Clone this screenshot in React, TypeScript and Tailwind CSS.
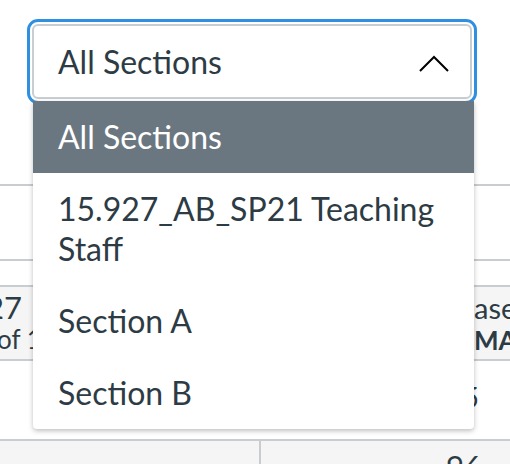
import React from "react";

const items = [
  { label: "All Sections", active: true },
  { label: "15.927_AB_SP21 Teaching Staff", active: false },
  { label: "Section A", active: false },
  { label: "Section B", active: false },
];

export default function App() {
  return (
    <div
      className="relative w-[510px] h-[464px] overflow-hidden bg-white text-[#2d3b45]"
      style={{ fontFamily: "Lato, 'Open Sans', sans-serif" }}
    >
      {/* Select trigger */}
      <div className="h-[184px] pt-[24px] pl-[32px]">
        <div className="relative w-[440px] h-[75px] flex items-center pl-[24px] bg-white border-2 border-[#c7cdd1] rounded-[6px] outline-3 outline-solid outline-offset-2 outline-[#2f8fe0]">
          <span className="text-[32px] leading-none">All Sections</span>
          <svg
            className="absolute left-[384px] top-[29px]"
            width="32"
            height="18"
            viewBox="0 0 32 18"
            fill="none"
          >
            <polyline points="2,16 16,2 30,16" stroke="#000" strokeWidth="2" />
          </svg>
        </div>
      </div>

      {/* Table behind */}
      <div className="border-t-2 border-[#c7cdd1] h-[75px]" />
      <div className="border-t-2 border-[#c7cdd1] h-[26px]" />
      <div className="border-t-2 border-[#c7cdd1] border-b-2 h-[76px] bg-[#f5f5f5] flex justify-between">
        <div className="w-[22px] flex flex-col items-end whitespace-nowrap pt-[3px]">
          <span className="text-[31px] leading-[34px]">27</span>
          <span className="text-[26px] leading-[30px] self-start -ml-[3px]">of 100</span>
        </div>
        <div className="w-[36px] flex flex-col whitespace-nowrap pt-[4px]">
          <span className="text-[29px] leading-[34px]">ase</span>
          <span className="text-[26px] leading-[30px] font-bold">MAX</span>
        </div>
      </div>
      <div className="h-[78px] flex justify-end pr-[31px]">
        <span className="text-[28px] leading-[72px] whitespace-nowrap">5</span>
      </div>
      <div className="border-t-2 border-[#c7cdd1] h-[40px] bg-[#f5f5f5] flex">
        <div className="w-[261px] border-r-2 border-[#c7cdd1]" />
        <div className="flex-1 pl-[185px] pt-[10px] text-[31px] leading-none">96</div>
      </div>

      {/* Open menu */}
      <ul className="absolute left-[33px] top-[101px] w-[441px] bg-white rounded-b-[4px] shadow-[0_2px_5px_rgba(0,0,0,0.25)] z-10">
        {items.map((it) => (
          <li
            key={it.label}
            className={`pl-[25px] pr-[30px] py-[16px] text-[32px] leading-[40px] ${
              it.active ? "bg-[#6b7780] text-white" : "text-[#2d3b45]"
            }`}
          >
            {it.label}
          </li>
        ))}
      </ul>
    </div>
  );
}
